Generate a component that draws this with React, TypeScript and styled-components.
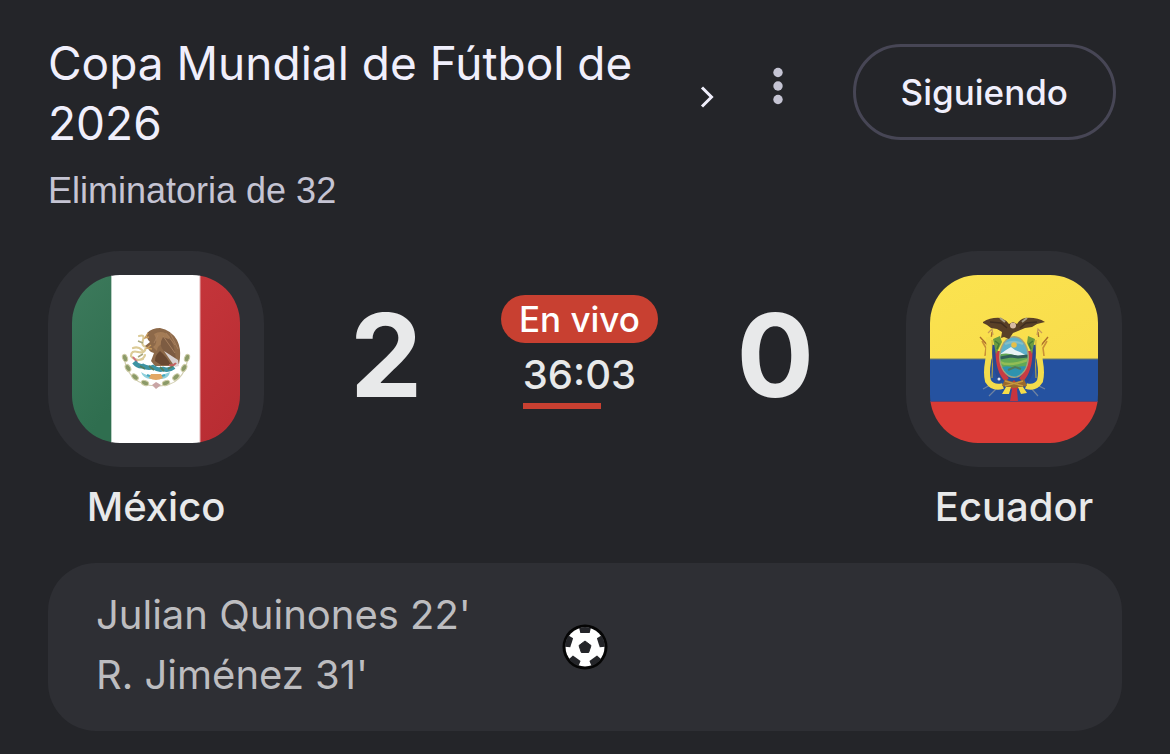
import React from 'react';
import styled, {createGlobalStyle} from 'styled-components';

const display = `Inter, Roboto, sans-serif`;
const text = `'Liberation Sans', Arial, sans-serif`;

const colors = {
  page: '#242529',
  surface: '#2e2f34',
  title: '#f0effc',
  muted: '#c5c4d3',
  strong: '#e8e9ea',
  scorer: '#bdbdc0',
  outline: '#474655',
  live: '#c84031',
};

const GlobalStyle = createGlobalStyle`
  * {
    box-sizing: border-box;
  }

  body {
    margin: 0;
    background: ${colors.page};
    font-family: ${display};
  }
`;

const Page = styled.main`
  padding: 33px 48px 23px;
`;

const Header = styled.header`
  display: flex;
  align-items: flex-start;
`;

const Headings = styled.div`
  flex: 1;
  min-width: 0;
  padding-right: 11px;
`;

const TitleLink = styled.a`
  display: flex;
  align-items: flex-start;
  color: ${colors.title};
  text-decoration: none;

  svg {
    flex: none;
    margin-top: 52px;
  }
`;

const Title = styled.h1`
  flex: 1;
  min-width: 0;
  margin: 0;
  padding-right: 40px;
  font-size: 46px;
  font-weight: 400;
  line-height: 60px;
`;

const Stage = styled.p`
  margin: 16px 0 0;
  color: ${colors.muted};
  font-family: ${text};
  font-size: 36px;
  line-height: 44px;
`;

const IconButton = styled.button`
  display: flex;
  align-items: center;
  justify-content: center;
  width: 96px;
  height: 96px;
  margin: 5px 27px 0 0;
  padding: 0;
  border: 0;
  background: none;
  color: ${colors.muted};
`;

const FollowButton = styled.button`
  height: 96px;
  margin: 11px 6px 0 0;
  padding: 0 45px;
  border: 3px solid ${colors.outline};
  border-radius: 48px;
  background: none;
  color: ${colors.title};
  font-family: ${display};
  font-size: 35px;
  font-weight: 500;
`;

const Match = styled.section`
  display: flex;
  align-items: flex-start;
  margin-top: 38px;
`;

const Team = styled.div`
  display: flex;
  flex-direction: column;
  align-items: center;
  width: 216px;
`;

const FlagTile = styled.div`
  padding: 24px;
  border-radius: 72px;
  background: ${colors.surface};

  svg {
    display: block;
    border-radius: 48px;
  }
`;

const TeamName = styled.h2`
  margin: 12px 0 0;
  color: ${colors.strong};
  font-size: 40px;
  font-weight: 500;
  line-height: 56px;
`;

const Scoreboard = styled.div`
  display: flex;
  flex: 1;
  align-items: center;
  justify-content: space-between;
  height: 210px;
  padding: 0 92px 0 86px;
`;

const Score = styled.span`
  color: ${colors.strong};
  font-size: 115px;
  font-weight: 700;
  line-height: 120px;
`;

const Status = styled.div`
  display: flex;
  flex-direction: column;
  align-items: center;
  padding-bottom: 8px;
`;

const LivePill = styled.span`
  padding: 0 18px;
  border-radius: 24px;
  background: ${colors.live};
  color: #fff;
  font-size: 35px;
  font-weight: 500;
  line-height: 48px;
`;

const Clock = styled.div`
  padding-top: 4px;
  color: ${colors.strong};
  font-size: 40px;
  font-weight: 500;
  line-height: 56px;
`;

const Progress = styled.div`
  height: 6px;
  background: ${colors.live};
`;

const Scorers = styled.section`
  display: grid;
  grid-template-columns: 1fr auto 1fr;
  align-items: center;
  margin-top: 28px;
  padding: 22px 48px;
  border-radius: 48px;
  background: ${colors.surface};
`;

const ScorerList = styled.ul`
  margin: 0;
  padding: 0 0 4px;
  color: ${colors.scorer};
  font-size: 40px;
  line-height: 60px;
  list-style: none;
`;

function Chevron() {
  return (
    <svg width="24" height="24" viewBox="0 0 24 24" aria-hidden="true">
      <path d="M7 2.5 16.5 12 7 21.5" fill="none" stroke="currentColor" strokeWidth="3" />
    </svg>
  );
}

function MoreIcon() {
  return (
    <svg width="12" height="38" viewBox="0 0 12 38" fill="currentColor" aria-hidden="true">
      <circle cx="6" cy="5.5" r="4.7" />
      <circle cx="6" cy="19" r="4.7" />
      <circle cx="6" cy="32.5" r="4.7" />
    </svg>
  );
}

const wreath = [
  [53, 83, 70],
  [56, 93, 60],
  [63, 102, 42],
  [73, 108, 20],
  [94, 108, -20],
  [104, 102, -42],
  [112, 93, -60],
  [115, 83, -70],
];

function MexicoFlag() {
  return (
    <svg width="168" height="168" viewBox="0 0 168 168" role="img" aria-label="México">
      <defs>
        <linearGradient id="mx-green" x1="0" y1="0" x2="0.3" y2="1">
          <stop offset="0" stopColor="#3d7a5c" />
          <stop offset="1" stopColor="#2f6e4f" />
        </linearGradient>
        <linearGradient id="mx-red" x1="0" y1="0" x2="0.3" y2="1">
          <stop offset="0" stopColor="#c4353a" />
          <stop offset="1" stopColor="#b92d33" />
        </linearGradient>
      </defs>
      <path d="M39 0h89v168H39z" fill="#fff" />
      <path d="M0 0h39v168H0z" fill="url(#mx-green)" />
      <path d="M128 0h40v168h-40z" fill="url(#mx-red)" />
      <path d="M39.5 0v168" stroke="#b9cfc3" />
      <path d="M128 0v168" stroke="#e3b0b2" />

      {/* laurel and oak */}
      <path d="M52 82Q56 110 84 111T116 82" fill="none" stroke="#d3d0b4" strokeWidth="1.2" />
      {wreath.map(([x, y, angle]) => (
        <ellipse
          key={`${x}-${y}`}
          cx={x}
          cy={y}
          rx="3.8"
          ry="2.4"
          fill="#8b9a68"
          stroke="#cdcba6"
          transform={`rotate(${angle} ${x} ${y})`}
        />
      ))}
      <path d="M80 110l4-3 5 3-5 4z" fill="#c9a5a5" />

      {/* serpent */}
      <path
        d="M67 61q6-2 4 4t3 7q-1 7-8 5t-7 4q5 6 12 3M61 73q5-2 9 2M67 85q5-1 6-5"
        fill="none"
        stroke="#dccb97"
        strokeWidth="2.2"
        strokeLinecap="round"
      />
      <path d="M66 66l5 2M66 82l5-3" stroke="#a9a77e" strokeWidth="1.5" />

      {/* eagle */}
      <path
        d="M75 58q5-5 13-5 11 2 17 12 4 8 3 18l-1 6q-3 0-7-5l2 7H83l-4-5 3-8q-5-1-6-5l-3-2 5-4q-4-3-3-9z"
        fill="#8d6949"
      />
      <path d="M82 59q9-5 16 3l-5 7q-8 0-8 7l-4-4q6-4 1-13z" fill="#a47c56" />
      <path d="M91 62q-5 8 1 14l12 10q-1-14-5-21z" fill="#7d5c42" />
      <path d="M88 76q-5 4-5 10l6 4h10q-4-8-11-14z" fill="#694831" />
      <path d="M92 76l14 9 1 6-4 1z" fill="#d9d2d2" />
      <path d="M94 58l9 12M91 61l12 17M98 58l8 16M86 60l-4 8" stroke="#a98261" strokeWidth="0.9" />
      <path d="M76 58l-3 5 4-1M79 70l-4 3 5 1" stroke="#c69a5c" strokeWidth="1.4" fill="none" />

      {/* nopal, lake and ribbon */}
      <path d="M61 82l4 5" stroke="#d16d7e" strokeWidth="2" />
      <path
        d="M62 87q4 5 9 4 5 3 10 1 6 4 10 2 6 2 11-2"
        fill="none"
        stroke="#3d93a3"
        strokeWidth="4.5"
      />
      <path d="M68 91l5 3M77 91l5 4M88 92l4 4M96 94l5-3" stroke="#547d5b" strokeWidth="1.8" />
      <path d="M97 90q5 1 7-2" stroke="#c26260" strokeWidth="2" fill="none" />
      <path d="M69 97q7 5 15 4t14-4q-1 6-8 7H78q-7-1-9-7z" fill="#8fd0dc" />
      <path d="M75 100q8 4 18 0" stroke="#45a7bd" strokeWidth="2" fill="none" />
      <path d="M79 99h10l2 4q-7 4-14 0z" fill="#e2a765" />
    </svg>
  );
}

function EcuadorFlag() {
  return (
    <svg width="168" height="168" viewBox="0 0 168 168" role="img" aria-label="Ecuador">
      <defs>
        <linearGradient id="ec-yellow" x1="0" y1="0" x2="1" y2="1">
          <stop offset="0" stopColor="#fbe34f" />
          <stop offset="1" stopColor="#f8dc4c" />
        </linearGradient>
        <clipPath id="ec-shield">
          <ellipse cx="84" cy="82" rx="13.5" ry="19.5" />
        </clipPath>
      </defs>
      <path d="M0 0h168v84H0z" fill="url(#ec-yellow)" />
      <path d="M0 84h168v43H0z" fill="#2552a0" />
      <path d="M0 126.5h168V168H0z" fill="#da3b36" />
      <path d="M0 84h168" stroke="#6d7d6d" />
      <path d="M0 126.5h168" stroke="#663f6e" />

      {/* lances */}
      <path d="M62 57l-3 23M50 62l11 12M108 57l3 23M118 62l-10 12" stroke="#ad702d" strokeWidth="1.4" />
      <path d="M58 58l4-4 1 6M112 58l-4-4-1 6" fill="none" stroke="#c99b56" strokeWidth="1.2" />
      <path d="M52 66l4 7-1 8M117 66l-4 7 1 8" fill="none" stroke="#c99036" strokeWidth="1.6" />
      <path d="M62 109l-9 5M67 113l-8 8M105 109l10 5M101 113l7 8" stroke="#6f82a0" strokeWidth="1.2" />

      {/* flags draped round the shield */}
      <path
        d="M59 62q1 14-1 25t0 19q5 8 15 5M109 62q-1 14 1 25t0 19q-5 8-14 5"
        fill="none"
        stroke="#f3dc4c"
        strokeWidth="6"
      />
      <path d="M62 65q1 15 0 38M106 65q-1 15 0 38" fill="none" stroke="#c7ab3c" strokeWidth="1" />
      <path d="M65 70q-2 24 7 36M103 70q2 24-7 36" fill="none" stroke="#294a91" strokeWidth="5" />
      <path d="M68 76q0 20 9 29M100 76q0 20-9 29" fill="none" stroke="#c93b43" strokeWidth="5" />
      <path d="M63 64l7-3 2 6-6 12zM98 61l7 3-3 15-5-11z" fill="#6c9c42" />
      <path d="M65 66l4 3-2 5M103 66l-4 3 2 5" stroke="#457b3a" strokeWidth="1.5" fill="none" />
      <circle cx="69" cy="104" r="1.5" fill="#dce4ef" />

      {/* fasces and bows */}
      <path d="M78 112l6-7 6 7-3 2 1 12h-8l2-12z" fill="#c7343e" />
      <path d="M75 104q9 6 19 0l3 7-13 2-12-2z" fill="#9a6a2c" />
      <path d="M75 106l18 5M93 106l-18 5" stroke="#c7993f" strokeWidth="1.4" />
      <path d="M76 112h5l-2 7h-7zM88 112h5l4 6-6 1z" fill="#f4dc4a" />

      {/* oval shield */}
      <ellipse cx="84" cy="82" rx="15" ry="21" fill="#a7a07a" />
      <g clipPath="url(#ec-shield)">
        <path d="M68 60h32v44H68z" fill="#5eb0ca" />
        <path d="M69 80l7-5 5-3 4 3 5 2 9 5z" fill="#e9f4f5" />
        <path d="M68 80q8-3 16 0t16-1v17H68z" fill="#62a855" />
        <path d="M70 83l11-2 7 1 10-1" stroke="#315f58" strokeWidth="3" fill="none" />
        <path d="M70 87q9 5 28-2" stroke="#92bd55" strokeWidth="2.5" fill="none" />
        <path d="M68 94q8-5 16-1 8-3 16-1v14H68z" fill="#2e93af" />
        <path d="M78 95l7-3 6 2" stroke="#50795c" strokeWidth="2" fill="none" />
      </g>
      <path d="M75 69q9-4 18 0" stroke="#86bec5" strokeWidth="2.4" fill="none" />
      <circle cx="84" cy="70" r="2.8" fill="#e5bf49" />

      {/* condor */}
      <path
        d="M53 47q8-5 18-4 5 2 8 6l4-2 4 2q3-5 8-6 12-1 20 4l-8 2-5 3-7 1-7 3-5 2-4 6-5-2-3 1 1-6-5-3-6-1-4-3-4-2z"
        fill="#594027"
      />
      <path d="M60 47l11 1 6 5M107 47l-11 1-6 5" stroke="#3f2d20" strokeWidth="1.4" fill="none" />
      <path d="M70 43l5 4M97 43l-5 4" stroke="#a59c84" strokeWidth="2" />
      <circle cx="83" cy="50.5" r="3" fill="#d9bba4" />
    </svg>
  );
}

function Ball() {
  return (
    <svg width="46" height="46" viewBox="0 0 46 46" role="img" aria-label="Gol">
      <defs>
        <clipPath id="ball">
          <circle cx="23" cy="23" r="20" />
        </clipPath>
      </defs>
      <circle cx="23" cy="23" r="22.5" fill="#050505" />
      <circle cx="23" cy="23" r="19.5" fill="#fff" />
      <g clipPath="url(#ball)" fill="#242529">
        {[0, 72, 144, 216, 288].map((angle) => (
          <path
            key={angle}
            d="M16.5 1h13l-1.8 8h-9.4z"
            transform={`rotate(${angle} 23 23)`}
          />
        ))}
      </g>
      <path
        d="M23 17l6 4.5-2.3 7h-7.4l-2.3-7z"
        fill="#242529"
        stroke="#242529"
        strokeLinejoin="round"
      />
    </svg>
  );
}

const scorers = ["Julian Quinones 22'", "R. Jiménez 31'"];

export default function App() {
  return (
    <>
      <GlobalStyle />
      <Page>
        <Header>
          <Headings>
            <TitleLink href="#">
              <Title>Copa Mundial de Fútbol de 2026</Title>
              <Chevron />
            </TitleLink>
            <Stage>Eliminatoria de 32</Stage>
          </Headings>
          <IconButton type="button" aria-label="Más opciones">
            <MoreIcon />
          </IconButton>
          <FollowButton type="button">Siguiendo</FollowButton>
        </Header>

        <Match>
          <Team>
            <FlagTile>
              <MexicoFlag />
            </FlagTile>
            <TeamName>México</TeamName>
          </Team>
          <Scoreboard>
            <Score>2</Score>
            <Status>
              <LivePill>En vivo</LivePill>
              <div>
                <Clock>36:03</Clock>
                <Progress style={{width: '69%'}} />
              </div>
            </Status>
            <Score>0</Score>
          </Scoreboard>
          <Team>
            <FlagTile>
              <EcuadorFlag />
            </FlagTile>
            <TeamName>Ecuador</TeamName>
          </Team>
        </Match>

        <Scorers>
          <ScorerList>
            {scorers.map((scorer) => (
              <li key={scorer}>{scorer}</li>
            ))}
          </ScorerList>
          <Ball />
        </Scorers>
      </Page>
    </>
  );
}
